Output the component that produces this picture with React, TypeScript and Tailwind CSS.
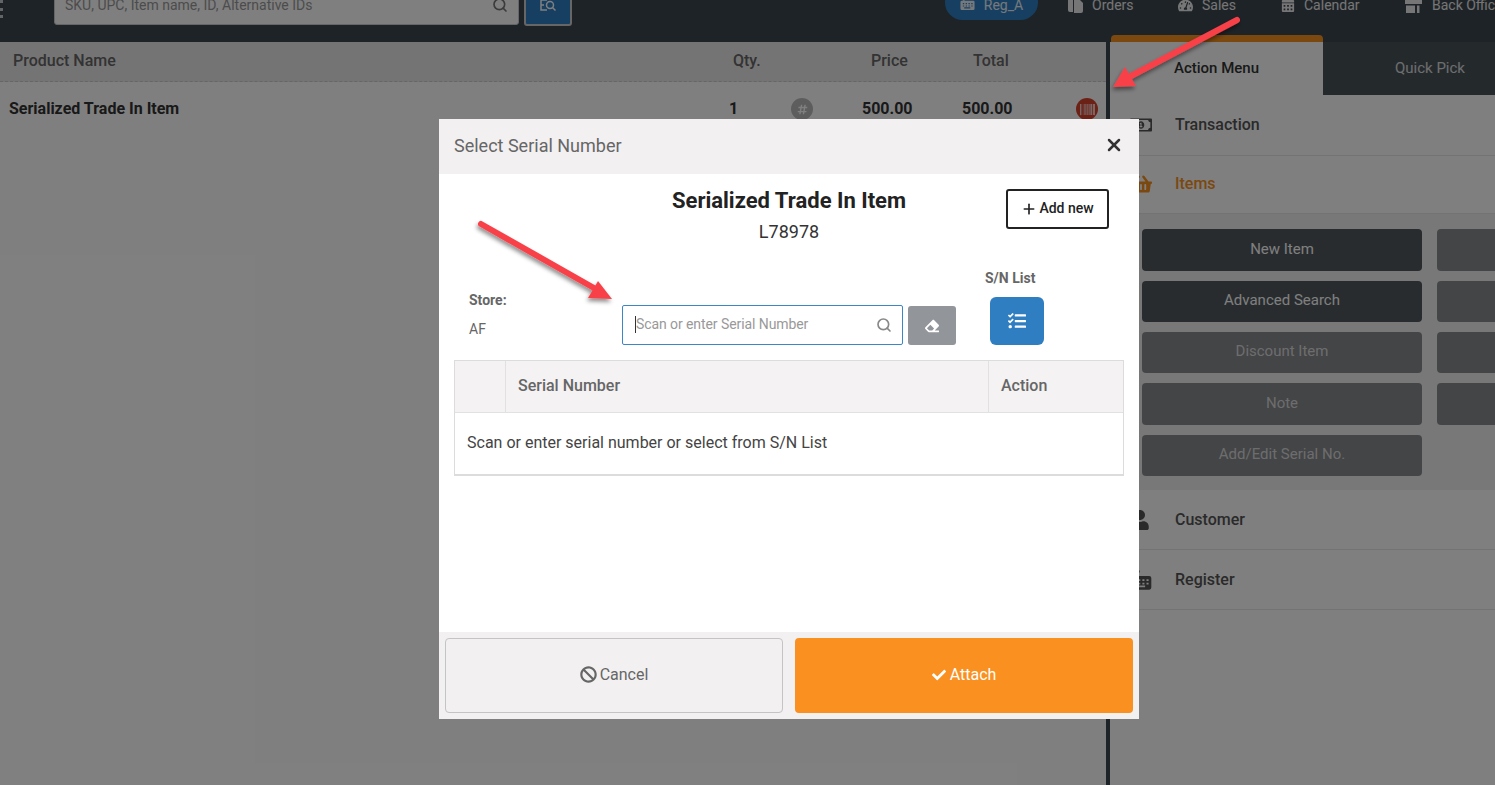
import { Plus, Search, X } from "lucide-react";
import {
  FaBan,
  FaBarcode,
  FaCalendarAlt,
  FaCheck,
  FaEraser,
  FaHashtag,
  FaRegMoneyBillAlt,
  FaShoppingBasket,
  FaTachometerAlt,
  FaTasks,
  FaUser,
} from "react-icons/fa";

function RegisterIcon({ size }: { size: number }) {
  return (
    <svg width={size} height={size} viewBox="0 0 16 16" fill="currentColor">
      <path
        fillRule="evenodd"
        d="M2 5h12a1.5 1.5 0 0 1 1.5 1.5v7A1.5 1.5 0 0 1 14 15H2a1.5 1.5 0 0 1-1.5-1.5v-7A1.5 1.5 0 0 1 2 5zm1 2.5v1.2h1.5V7.500zm3 0v1.200h1.500V7.500zm3 0v1.200h1.500V7.500zm3 0v1.200h1.500V7.500zm-9 2.500v1.200h1.500V10zm3 0v1.200h1.500V10zm3 0v1.200h1.500V10zm3 0v1.200h1.500V10zm-7.500 2v1.200h6.500V12z"
      />
      <path d="M3 1h4v1.500H5V5H3z" />
    </svg>
  );
}

function OrdersIcon() {
  return (
    <svg width="15" height="15" viewBox="0 0 15 15" fill="currentColor">
      <path d="M0 2h5v12H2a2 2 0 0 1-2-2z" />
      <path d="M6 1h5l4 4v8a2 2 0 0 1-2 2H6z" />
    </svg>
  );
}

function BackOfficeIcon() {
  return (
    <svg width="17" height="17" viewBox="0 0 17 17" fill="currentColor">
      <path d="M0 0h17v7H0z" />
      <path d="M1 8.500h9V16H1z" />
      <path d="M12 8.500h2.500V16H12z" />
    </svg>
  );
}

function ScanSearchIcon() {
  return (
    <svg width="16" height="16" viewBox="0 0 16 16" fill="none" stroke="currentColor" strokeWidth="1.5">
      <path d="M7 1H1v10h6M1 6h3" />
      <circle cx="10" cy="6" r="3.500" />
      <path d="M12.500 8.500L15.500 11.500" />
    </svg>
  );
}

const navItems = [
  { label: "Orders", icon: <OrdersIcon />, textGap: "gap-[9px]", width: "w-[110px]" },
  { label: "Sales", icon: <FaTachometerAlt size={15} />, textGap: "gap-[9px]", width: "w-[103px]" },
  { label: "Calendar", icon: <FaCalendarAlt size={14} />, textGap: "gap-[9px]", width: "w-[124px]" },
  { label: "Back Office", icon: <BackOfficeIcon />, textGap: "gap-[10px]", width: "w-[120px]" },
];

const menuButtons = [
  { label: "New Item", active: true, h: "h-[42px]" },
  { label: "", active: false, h: "h-[42px]" },
  { label: "Advanced Search", active: true, h: "h-[41px]" },
  { label: "", active: false, h: "h-[41px]" },
  { label: "Discount Item", active: false, h: "h-[41px]" },
  { label: "", active: false, h: "h-[41px]" },
  { label: "Note", active: false, h: "h-[42px]" },
  { label: "", active: false, h: "h-[42px]" },
  { label: "Add/Edit Serial No.", active: false, h: "h-[41px]" },
];

function MenuRow({ icon, label, orange, size }: { icon: React.ReactNode; label: string; orange?: boolean; size: string }) {
  return (
    <div className={`flex items-center border-b border-[#e6e6e6] pl-5 ${size} ${orange ? "text-[#f7901e]" : "text-[#555]"}`}>
      <span className="flex w-[45px] shrink-0 items-center">{icon}</span>
      <span className="text-[16px] font-medium">{label}</span>
    </div>
  );
}

export default function App() {
  return (
    <div className="relative h-[785px] w-[1495px] overflow-hidden bg-white font-['Roboto',sans-serif]">
      {/* top bar */}
      <header className="flex h-[42px] items-start overflow-hidden bg-[#3c464e] pl-[54px] text-white">
        {/* sliver of the logo at the window edge */}
        <span className="absolute left-0 top-0 h-[3px] w-[3px] bg-white/70" />
        <span className="absolute left-0 top-[8px] h-[3px] w-[3px] bg-white/70" />
        <span className="absolute left-0 top-[15px] h-[3px] w-[3px] bg-white/70" />

        <div className="-mt-[15px] flex h-[40px] w-[465px] shrink-0 items-center justify-between rounded-[3px] border border-[#ccc] bg-white pl-[10px] pr-[10px] text-[#999]">
          <span className="text-[14px]">SKU, UPC, Item name, ID, Alternative IDs</span>
          <Search size={16} strokeWidth={2.5} className="text-[#777]" />
        </div>
        <button className="-mt-[15px] ml-[5px] flex h-[41px] w-[48px] shrink-0 items-start justify-center rounded-[3px] border-2 border-[#ccc] bg-[#2f7ec2] pt-[12px] text-white">
          <ScanSearchIcon />
        </button>
        <div className="ml-[373px] flex shrink-0 items-start">
          <div className="-mt-[15px] flex h-[35px] w-[93px] items-start justify-center gap-[9px] rounded-full bg-[#2f7ec2] pt-[10px] text-[14px] leading-[20px] text-white/90">
            <span className="mt-[1px]">
              <RegisterIcon size={15} />
            </span>
            Reg_A
          </div>
          <nav className="ml-[30px] flex items-center text-[14px] text-white/90">
            {navItems.map((item) => (
              <div key={item.label} className={`-mt-[5px] flex h-[20px] shrink-0 items-center ${item.textGap} ${item.width}`}>
                {item.icon}
                <span className="whitespace-nowrap">{item.label}</span>
              </div>
            ))}
          </nav>
        </div>
      </header>

      <div className="flex h-[743px]">
        {/* cart */}
        <main className="w-[1106px] shrink-0 bg-white">
          <div className="flex h-[40px] items-center border-b border-dashed border-[#ccc] bg-[#e9e9e9] pb-[2px] text-[16px] font-medium text-[#666]">
            <span className="ml-[13px] w-[720px]">Product Name</span>
            <span className="w-[138px]">Qty.</span>
            <span className="w-[102px]">Price</span>
            <span>Total</span>
          </div>
          <div className="flex h-[54px] items-center text-[16px] font-bold text-[#333]">
            <span className="ml-[9px] w-[720px]">Serialized Trade In Item</span>
            <span className="w-[62px]">1</span>
            <span className="flex h-[22px] w-[22px] items-center justify-center rounded-full bg-[#bbb] text-white">
              <FaHashtag size={11} />
            </span>
            <span className="ml-[49px] w-[100px]">500.00</span>
            <span className="w-[114px]">500.00</span>
            <span className="flex h-[22px] w-[22px] items-center justify-center rounded-full bg-[#d9432f] text-white">
              <FaBarcode size={15} />
            </span>
          </div>
        </main>

        {/* action menu */}
        <aside className="min-w-0 flex-1 border-l-[4px] border-[#3c464e] bg-white">
          <div className="-mt-[7px] flex h-[60px] items-stretch text-[15px]">
            <div className="ml-px flex w-[212px] items-center rounded-t-[4px] border-t-[7px] border-[#f7901e] bg-white pl-[63px] font-medium text-[#333]">
              Action Menu
            </div>
            <div className="mt-[7px] flex flex-1 items-center bg-[#485259] pl-[72px] text-white/80">Quick Pick</div>
          </div>
          <MenuRow icon={<FaRegMoneyBillAlt size={22} />} label="Transaction" size="h-[61px] pb-px" />
          <MenuRow icon={<FaShoppingBasket size={22} />} label="Items" orange size="h-[58px] pb-[2px]" />
          <div className="h-[276px] overflow-hidden bg-[#f0f0f0] pl-[32px] pt-[15px]">
            <div className="grid w-[575px] grid-cols-[280px_280px] gap-x-[15px] gap-y-[10px]">
              {menuButtons.map((b, i) => (
                <button
                  key={i}
                  className={`flex items-center justify-center rounded-[4px] pb-[2px] text-[15px] ${b.h} ${
                    b.active ? "bg-[#50585e] text-white" : "bg-[#888a8e] text-white/70"
                  }`}
                >
                  {b.label}
                </button>
              ))}
            </div>
          </div>
          <MenuRow icon={<FaUser size={20} />} label="Customer" size="h-[60px]" />
          <MenuRow icon={<RegisterIcon size={22} />} label="Register" size="h-[60px]" />
        </aside>
      </div>

      {/* backdrop */}
      <div className="absolute inset-0 bg-black/50" />

      {/* modal */}
      <div className="absolute left-[439px] top-[119px] flex h-[600px] w-[700px] flex-col bg-white">
        <div className="flex h-[55px] shrink-0 items-center justify-between bg-[#f2f0f1] pb-[2px] pl-[15px] pr-[15px]">
          <span className="text-[18px] text-[#666]">Select Serial Number</span>
          <X size={20} strokeWidth={3} className="-mt-[1px] text-[#333]" />
        </div>

        <div className="flex-1 px-[15px]">
          <div className="relative h-[131px]">
            <div className="pt-[13px] text-center">
              <div className="text-[22px] font-bold leading-[28px] text-[#222]">Serialized Trade In Item</div>
              <div className="mt-[5px] text-[18px] leading-[24px] text-[#333]">L78978</div>
            </div>
            <button className="absolute left-[552px] top-[15px] flex h-[40px] w-[103px] items-center justify-center gap-[2px] rounded-[3px] border-2 border-[#222] bg-white pb-px text-[14px] font-medium text-[#222]">
              <Plus size={16} strokeWidth={2.5} />
              Add new
            </button>
          </div>

          <div className="flex h-[55px] items-start">
            <div className="w-[168px] pl-[15px]">
              <div className="-mt-[15px] text-[14px] font-bold leading-[20px] text-[#666]">Store:</div>
              <div className="mt-[9px] text-[14px] leading-[20px] text-[#666]">AF</div>
            </div>
            <div className="flex h-[40px] w-[281px] items-center justify-between rounded-[2px] border border-[#3a87c8] pb-px pl-[12px] pr-[10px]">
              <span className="border-l border-[#333] text-[14px] leading-[17px] tracking-[-0.08px] text-[#999]">Scan or enter Serial Number</span>
              <Search size={16} strokeWidth={2.5} className="text-[#888]" />
            </div>
            <button className="ml-[5px] mt-px flex h-[39px] w-[48px] items-center justify-center rounded-[3px] bg-[#92959a] text-white">
              <FaEraser size={14} />
            </button>
            <div className="relative ml-[34px] -mt-[8px]">
              <div className="absolute -left-[5px] -top-[29px] whitespace-nowrap text-[14px] font-bold leading-[20px] text-[#666]">S/N List</div>
              <button className="flex h-[48px] w-[54px] items-center justify-center rounded-[6px] bg-[#2f7ec2] text-white">
                <FaTasks size={18} />
              </button>
            </div>
          </div>

          <div className="border border-b-2 border-[#dddcdc]">
            <div className="grid h-[52px] grid-cols-[50px_483px_1fr] border-b border-[#e2e1e1] bg-[#f4f2f3] text-[16px] font-medium text-[#666]">
              <div />
              <div className="flex items-center border-l border-[#e2e1e1] pb-px pl-3">Serial Number</div>
              <div className="flex items-center border-l border-[#e2e1e1] pb-px pl-3">Action</div>
            </div>
            <div className="flex h-[61px] items-center pb-[2px] pl-3 text-[16px] text-[#444]">
              Scan or enter serial number or select from S/N List
            </div>
          </div>
        </div>

        <div className="grid h-[87px] shrink-0 grid-cols-2 gap-3 bg-[#f2f0f1] p-[6px] text-[16px]">
          <button className="flex items-center justify-center gap-[3px] rounded-[4px] border border-[#c4c4c4] bg-[#f2f0f1] pb-[2px] text-[#666]">
            <FaBan size={17} />
            Cancel
          </button>
          <button className="flex items-center justify-center gap-[4px] rounded-[4px] bg-[#f99020] pb-[2px] text-white">
            <FaCheck size={14} />
            Attach
          </button>
        </div>
      </div>

      {/* annotation arrows */}
      <svg className="absolute left-0 top-0" width="1495" height="785" viewBox="0 0 1495 785" fill="none">
        <defs>
          <filter id="arrowShadow" x="-20%" y="-20%" width="140%" height="150%">
            <feDropShadow dx="-1" dy="3" stdDeviation="2" floodColor="#000" floodOpacity="0.45" />
          </filter>
        </defs>
        <g filter="url(#arrowShadow)">
          <path d="M1237 20 L1131 76" stroke="#f8414a" strokeWidth="6" strokeLinecap="round" />
          <path d="M1113 87 L1125 67 L1136 86 Z" fill="#f8414a" />
          <path d="M481 224 L594 288" stroke="#f8414a" strokeWidth="6" strokeLinecap="round" />
          <path d="M612 299 L598 281 L588 298 Z" fill="#f8414a" />
        </g>
      </svg>
    </div>
  );
}
